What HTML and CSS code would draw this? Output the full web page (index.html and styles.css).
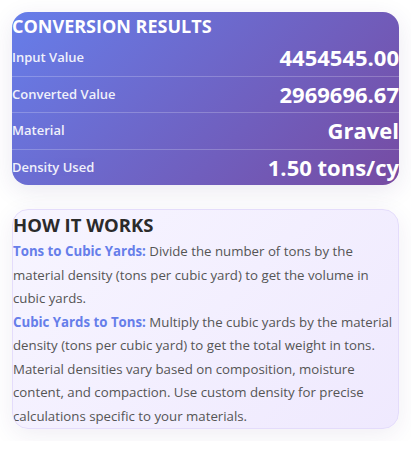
FILE: index.html
```html
<!DOCTYPE html>
<html lang="en">
<head>
<meta charset="utf-8">
<title>Conversion Results</title>
<link rel="stylesheet" href="styles.css">
</head>
<body>
<main class="page">
  <section class="results">
    <h2 class="results-title">CONVERSION RESULTS</h2>
    <div class="row">
      <span class="label">Input Value</span>
      <span class="value">4454545.00</span>
    </div>
    <div class="row">
      <span class="label">Converted Value</span>
      <span class="value">2969696.67</span>
    </div>
    <div class="row">
      <span class="label">Material</span>
      <span class="value">Gravel</span>
    </div>
    <div class="row">
      <span class="label">Density Used</span>
      <span class="value">1.50 tons/cy</span>
    </div>
  </section>
  <section class="info">
    <h3 class="info-title">HOW IT WORKS</h3>
    <p><strong>Tons to Cubic Yards:</strong> Divide the number of tons by the material density (tons per cubic yard) to get the volume in cubic yards.</p>
    <p><strong>Cubic Yards to Tons:</strong> Multiply the cubic yards by the material density (tons per cubic yard) to get the total weight in tons.</p>
    <p>Material densities vary based on composition, moisture content, and compaction. Use custom density for precise calculations specific to your materials.</p>
  </section>
</main>
</body>
</html>
```
FILE: styles.css
```css
* { box-sizing: border-box; }
html, body { margin: 0; padding: 0; background: #ffffff; }
body {
  font-family: "Open Sans", "Noto Sans", "DejaVu Sans", sans-serif;
  color: #333;
}
.page {
  padding: 12px;
  display: flex;
  flex-direction: column;
  gap: 24px;
}
.results {
  background: linear-gradient(135deg, #667eea 0%, #764ba2 100%);
  border-radius: 16px;
  color: #fff;
  overflow: hidden;
  box-shadow: 0 6px 24px rgba(60, 40, 120, 0.10);
}
.results-title {
  margin: 0;
  font-size: 18px;
  font-weight: 700;
  line-height: 28px;
  letter-spacing: 0;
}
.row {
  display: flex;
  justify-content: space-between;
  align-items: center;
  padding: 4px 0;
  line-height: 27.5px;
  border-bottom: 1px solid rgba(255, 255, 255, 0.22);
  white-space: nowrap;
}
.row:last-child { border-bottom: none; }
.label {
  font-size: 13px;
  font-weight: 600;
  opacity: 0.9;
}
.value {
  font-size: 22px;
  font-weight: 700;
}
.info {
  background: linear-gradient(135deg, #f7f5ff 0%, #efe9fe 100%);
  border: 1px solid #e4dcfb;
  border-radius: 16px;
  box-shadow: 0 6px 24px rgba(60, 40, 120, 0.08);
  overflow: hidden;
}
.info-title {
  margin: 0;
  font-size: 18.5px;
  font-weight: 700;
  line-height: 30px;
  color: #2b2b2b;
}
.info p {
  margin: 0;
  font-size: 13.25px;
  line-height: 23.5px;
  color: #555;
}
.info strong {
  color: #667eea;
  font-weight: 700;
}
```
